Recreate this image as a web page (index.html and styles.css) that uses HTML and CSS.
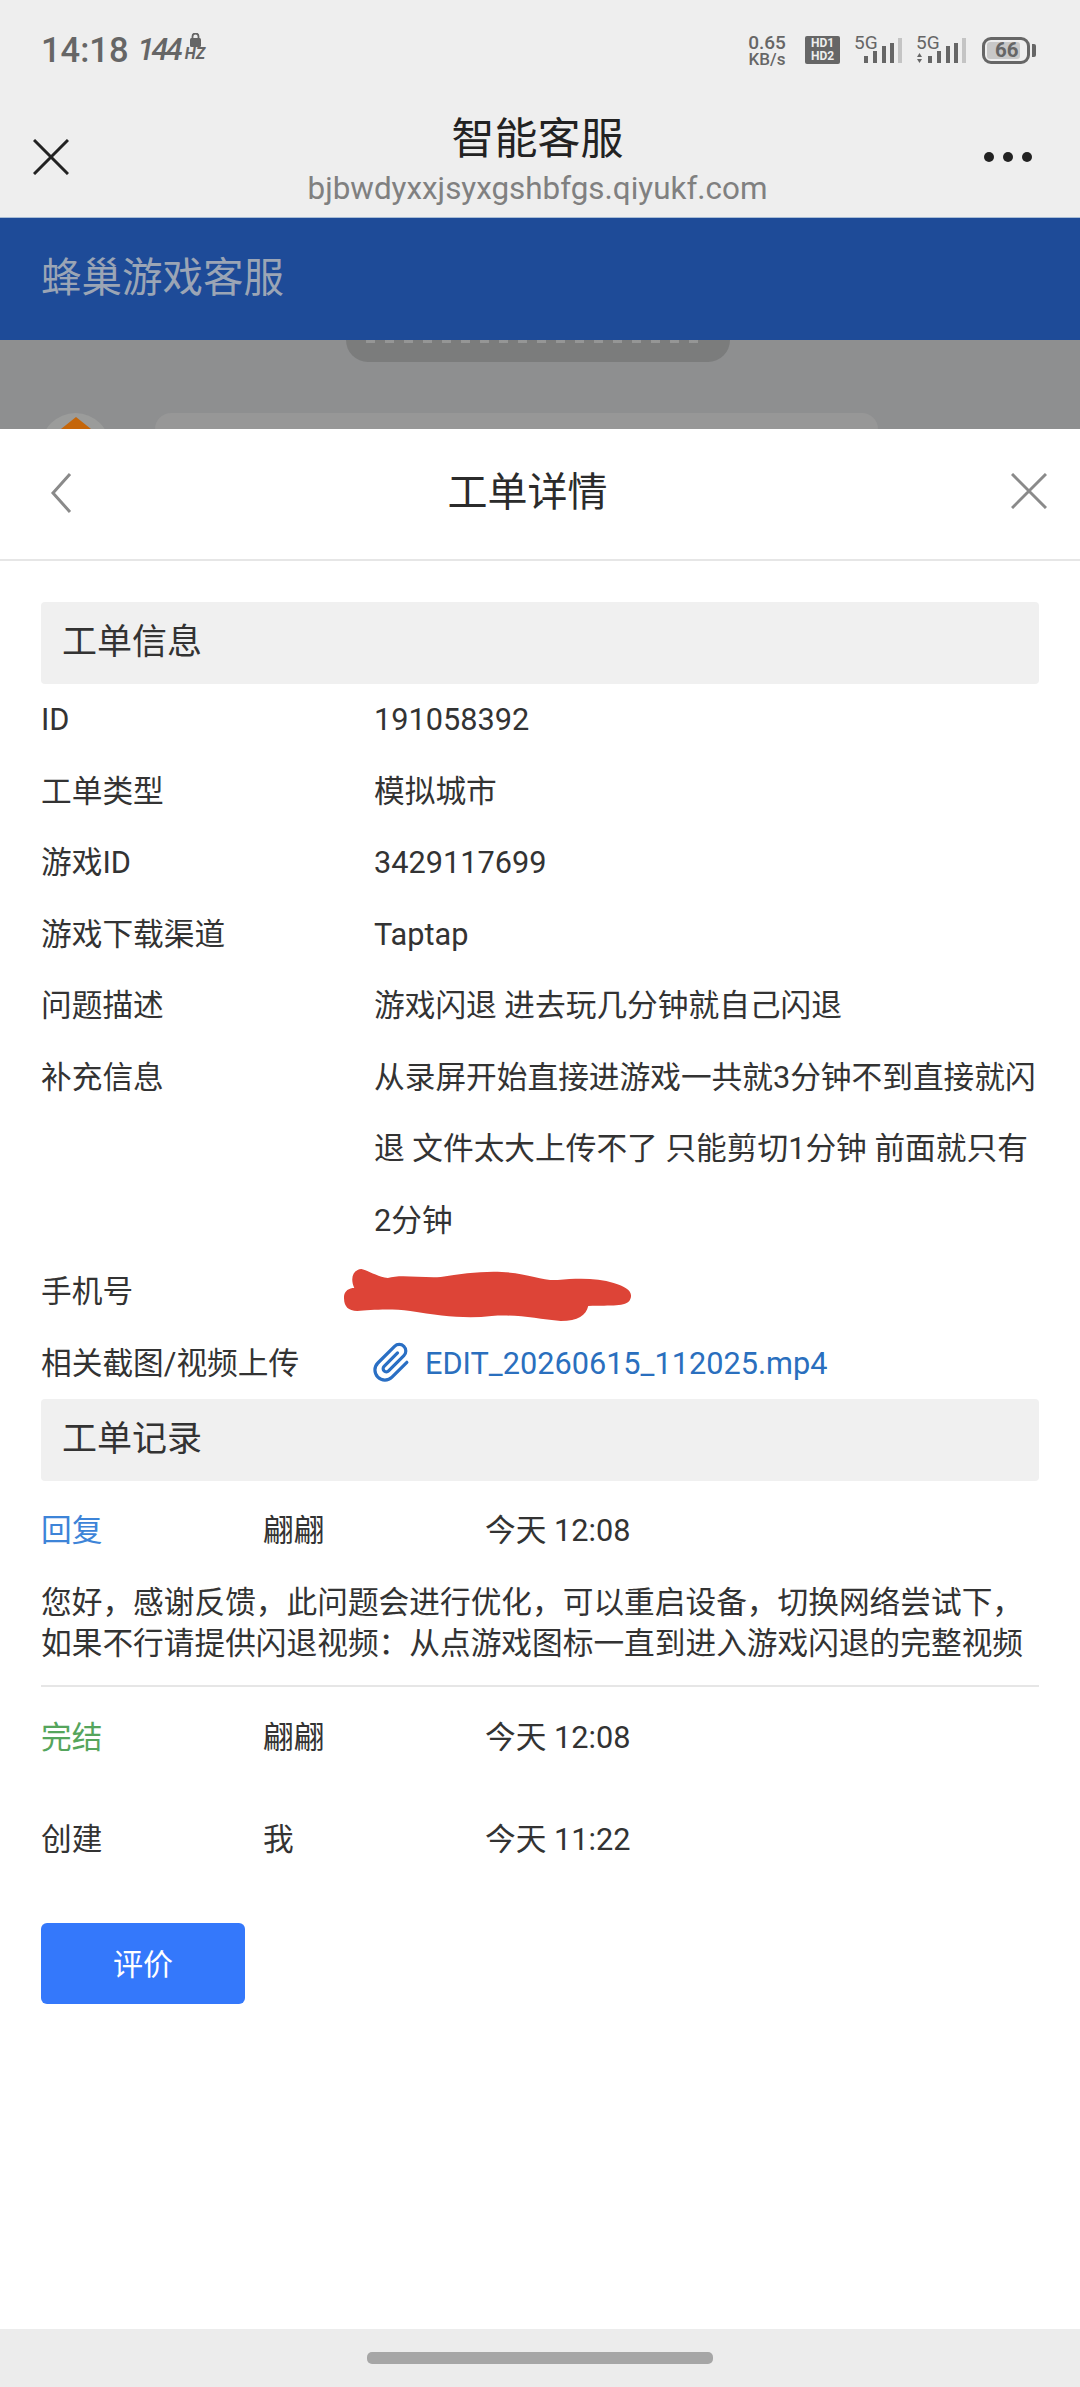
FILE: index.html
```html
<!DOCTYPE html>
<html lang="zh-CN">
<head>
<meta charset="utf-8">
<title>工单详情</title>
<link rel="stylesheet" href="styles.css">
</head>
<body>
<div class="screen">
  <div class="status">
    <div class="status-left">
      <span class="time">14:18</span>
      <span class="hz"><i>144</i><span class="hz-side">
        <svg class="lock" width="11" height="14" viewBox="0 0 11 14"><path d="M2.500 6V3.500a3 3 0 0 1 6 0V6" fill="none" stroke="#666" stroke-width="1.800"/><rect x="0" y="5" width="11" height="9" rx="1.500" fill="#666"/></svg>
        <i class="hz-unit">HZ</i></span></span>
    </div>
    <div class="status-right">
      <div class="speed"><span>0.65</span><span class="speed-unit">KB/s</span></div>
      <div class="hd"><span>HD1</span><span>HD2</span></div>
      <svg class="sig sig-one" width="56" height="33" viewBox="0 0 56 33"><text x="4" y="18" class="sig-t">5G</text><g fill="#666"><rect x="14" y="25" width="4" height="7"/><rect x="23" y="20" width="4" height="12"/><rect x="32" y="15" width="4" height="17"/><rect x="40" y="12" width="4" height="20"/></g><rect x="48" y="7" width="4" height="25" fill="#c4c4c4"/></svg>
      <svg class="sig sig-two" width="56" height="33" viewBox="0 0 56 33"><text x="3" y="18" class="sig-t">5G</text><path d="M4 26l2.500-4 2.500 4zM4 28l2.500 4 2.500-4z" fill="#666"/><g fill="#666"><rect x="15" y="25" width="4" height="7"/><rect x="24" y="20" width="4" height="12"/><rect x="33" y="15" width="4" height="17"/><rect x="41" y="12" width="4" height="20"/></g><rect x="49" y="7" width="4" height="25" fill="#c4c4c4"/></svg>
      <div class="batt-wrap"><div class="batt"><div class="batt-fill"><span>66</span></div></div><div class="batt-tip"></div></div>
    </div>
  </div>

  <div class="nav">
    <svg class="nav-x" width="36" height="36" viewBox="0 0 36 36"><path d="M1 1l34 34M35 1L1 35" stroke="#222" stroke-width="3" fill="none"/></svg>
    <div class="nav-mid">
      <div class="nav-title">智能客服</div>
      <div class="nav-url">bjbwdyxxjsyxgshbfgs.qiyukf.com</div>
    </div>
    <div class="nav-dots"><span></span><span></span><span></span></div>
  </div>

  <div class="brand">蜂巢游戏客服</div>

  <div class="peek">
    <div class="peek-pill"><div class="peek-hint"></div></div>
    <div class="peek-row">
      <div class="peek-avatar"><div class="peek-roof"></div></div>
      <div class="peek-bubble"></div>
    </div>
  </div>

  <div class="sheet">
    <div class="sheet-head">
      <svg class="sheet-back" width="22" height="40" viewBox="0 0 22 40"><path d="M20 1L3 20l17 19" stroke="#8a8a8a" stroke-width="3" fill="none"/></svg>
      <div class="sheet-title">工单详情</div>
      <svg class="sheet-x" width="36" height="36" viewBox="0 0 36 36"><path d="M1 1l34 34M35 1L1 35" stroke="#8a8a8a" stroke-width="3" fill="none"/></svg>
    </div>

    <div class="content">
      <div class="section">工单信息</div>
      <div class="info">
        <div class="label">ID</div><div class="value">191058392</div>
        <div class="label">工单类型</div><div class="value">模拟城市</div>
        <div class="label">游戏ID</div><div class="value">3429117699</div>
        <div class="label">游戏下载渠道</div><div class="value">Taptap</div>
        <div class="label">问题描述</div><div class="value">游戏闪退 进去玩几分钟就自己闪退</div>
        <div class="label">补充信息</div><div class="value">从录屏开始直接进游戏一共就3分钟不到直接就闪退 文件太大上传不了 只能剪切1分钟 前面就只有2分钟</div>
        <div class="label">手机号</div>
        <div class="value phone"><svg class="scribble" width="295" height="66" viewBox="0 0 290 66" preserveAspectRatio="none"><path d="M5 40C4 32 10 29 15 29C11 20 13 11 22 10C30 12 38 18 48 19C60 15 80 19 100 18C120 15 140 12 160 13C185 14 200 22 215 21C235 19 255 19 270 24C283 28 290 33 286 41C282 48 268 46 245 47C243 56 235 62 218 62C195 60 175 55 150 57C125 60 100 57 70 52C50 49 30 51 18 52C9 52 5 47 5 40Z" fill="#dd4437"/></svg></div>
        <div class="label">相关截图/视频上传</div>
        <div class="value file">
          <svg class="clip" width="48" height="48" viewBox="0 0 24 24"><path transform="rotate(45 12 12)" d="M17 6.500V17a5 5 0 0 1-10 0V5.200a3.300 3.300 0 0 1 6.600 0V16a1.600 1.600 0 0 1-3.200 0V6.500" fill="none" stroke="#2a6fc4" stroke-width="1.600" stroke-linecap="round"/></svg>
          <span>EDIT_20260615_112025.mp4</span>
        </div>
      </div>

      <div class="section">工单记录</div>
      <div class="rec rec-first"><span class="rec-type reply">回复</span><span class="rec-who">翩翩</span><span>今天 12:08</span></div>
      <div class="rec-text">您好，感谢反馈，此问题会进行优化，可以重启设备，切换网络尝试下，如果不行请提供闪退视频：从点游戏图标一直到进入游戏闪退的完整视频</div>
      <div class="rec"><span class="rec-type done">完结</span><span class="rec-who">翩翩</span><span>今天 12:08</span></div>
      <div class="rec"><span class="rec-type">创建</span><span class="rec-who">我</span><span>今天 11:22</span></div>
      <button class="rate">评价</button>
    </div>
  </div>

  <div class="home"><div class="home-bar"></div></div>
</div>
</body>
</html>
```
FILE: styles.css
```css
* { box-sizing: border-box; }
html, body { margin: 0; padding: 0; }
body { font-family: Roboto, "Noto Sans CJK SC", sans-serif; color: #333; background: #fff; }
.screen { width: 1080px; height: 2387px; display: flex; flex-direction: column; overflow: hidden; }

.status { height: 90px; flex: none; background: #eee; display: flex; justify-content: space-between; align-items: flex-start; padding: 31px 44px 0 41px; color: #666; }
.status-left { display: flex; align-items: center; height: 32px; margin-top: 3px; }
.time { font-size: 34.500px; font-weight: 500; line-height: 32px; }
.hz { display: flex; align-items: center; margin-left: 9px; font-size: 31px; line-height: 32px; font-weight: 500; letter-spacing: -3px; }
.hz-side { display: flex; flex-direction: column; align-items: center; margin-left: 5px; }
.lock { display: block; margin-top: -6px; }
.hz-unit { font-size: 16px; line-height: 14px; font-weight: 700; letter-spacing: 0; }

.status-right { display: flex; align-items: flex-start; }
.speed { width: 42px; display: flex; flex-direction: column; align-items: center; font-size: 19px; line-height: 16px; font-weight: 500; margin: 4px 17px 0 0; }
.speed-unit { font-size: 17px; }
.hd { width: 35px; height: 28px; margin: 5px 10px 0 0; border-radius: 2px; background: #666; color: #eee; font-size: 12px; line-height: 13px; font-weight: 700; display: flex; flex-direction: column; align-items: center; justify-content: center; }
.sig { display: block; }
.sig-one { margin-right: 7px; }
.sig-two { margin-right: 13px; }
.sig-t { font: 400 19px Roboto, sans-serif; fill: #666; }
.batt-wrap { display: flex; align-items: center; margin-top: 6px; }
.batt { width: 48px; height: 27px; border: 3px solid #666; border-radius: 9px; padding: 2px; }
.batt-fill { width: 33px; height: 17px; background: #c8c8c8; border-radius: 3px; font-size: 20.500px; line-height: 17px; font-weight: 700; color: #666; white-space: nowrap; padding-left: 8px; }
.batt-tip { width: 4px; height: 13px; background: #666; margin-left: 2px; border-radius: 0 2px 2px 0; }

.nav { height: 127px; flex: none; background: #eee; display: flex; justify-content: space-between; align-items: flex-start; padding: 0 48px 0 33px; }
.nav-x { margin-top: 49px; }
.nav-mid { display: flex; flex-direction: column; align-items: center; padding-top: 23px; margin-left: 22px; }
.nav-title { font-size: 43px; line-height: 52px; color: #222; }
.nav-url { font-size: 31.400px; line-height: 36px; color: #808080; margin-top: 6px; }
.nav-dots { display: flex; gap: 9px; margin-top: 62px; }
.nav-dots span { width: 10px; height: 10px; border-radius: 50%; background: #222; }

.brand { height: 123px; flex: none; background: #1e4b98; color: #9ba5b5; font-size: 40.500px; line-height: 120px; padding-left: 41px; border-top: 1px solid #a8bdd6; }

.peek { height: 89px; flex: none; background: #8e8f90; display: flex; flex-direction: column; align-items: center; overflow: hidden; }
.peek-pill { flex: none; width: 384px; height: 22px; background: #7b7c7c; border-radius: 0 0 24px 24px; margin-left: -5px; padding: 0 25px 0 20px; }
.peek-hint { height: 3px; background: repeating-linear-gradient(90deg, #b4b5b5 0 9px, #7b7c7c 9px 19px); opacity: .45; }
.peek-row { flex: none; align-self: stretch; display: flex; gap: 45px; padding-left: 41px; margin-top: 51px; }
.peek-avatar { width: 69px; height: 69px; border-radius: 50%; background: #9b9c9b; display: flex; justify-content: center; padding-top: 4px; }
.peek-roof { width: 0; height: 0; border-left: 25px solid transparent; border-right: 25px solid transparent; border-bottom: 20px solid #c5660a; }
.peek-bubble { width: 723px; height: 69px; background: #979797; border-radius: 16px; }

.sheet { flex: 1; background: #fff; border-radius: 22px 22px 0 0; display: flex; flex-direction: column; }
.sheet-head { height: 132px; flex: none; border-bottom: 2px solid #e6e6e6; display: flex; justify-content: space-between; align-items: flex-start; padding: 44px 33px 0 50px; }
.sheet-title { font-size: 40px; line-height: 40px; color: #2b2b2b; padding-right: 28px; }

.content { padding: 41px 41px 0; font-size: 30.700px; color: #333; }
.section { height: 82px; background: #f0f0f0; border-radius: 4px; padding-left: 21px; font-size: 35px; line-height: 81px; color: #333; }
.info { display: grid; grid-template-columns: 333px 1fr; line-height: 71.500px; }
.phone { position: relative; height: 71.500px; }
.scribble { position: absolute; left: -35px; top: 3px; }
.file { display: flex; align-items: center; gap: 9px; color: #2a6fbe; height: 71.500px; }
.clip { flex: none; margin-left: -6px; }

.rec { display: grid; grid-template-columns: 222px 222px 1fr; height: 102px; line-height: 101px; }
.rec-first { height: 100px; line-height: 100px; }
.rec-type.reply { color: #3d84d8; }
.rec-type.done { color: #55a55c; }
.rec-text { line-height: 41px; padding-top: 1px; border-bottom: 2px solid #e6e6e6; height: 106px; }
.rate { display: block; width: 204px; height: 81px; margin-top: 32px; padding: 0 0 3px; background: #3478fb; color: #fff; border: 0; border-radius: 6px; font: 30px Roboto, "Noto Sans CJK SC", sans-serif; }

.home { height: 58px; flex: none; background: #ececec; display: flex; justify-content: center; padding-top: 23px; }
.home-bar { width: 346px; height: 12px; background: #a6a6a6; border-radius: 5px; }
```
